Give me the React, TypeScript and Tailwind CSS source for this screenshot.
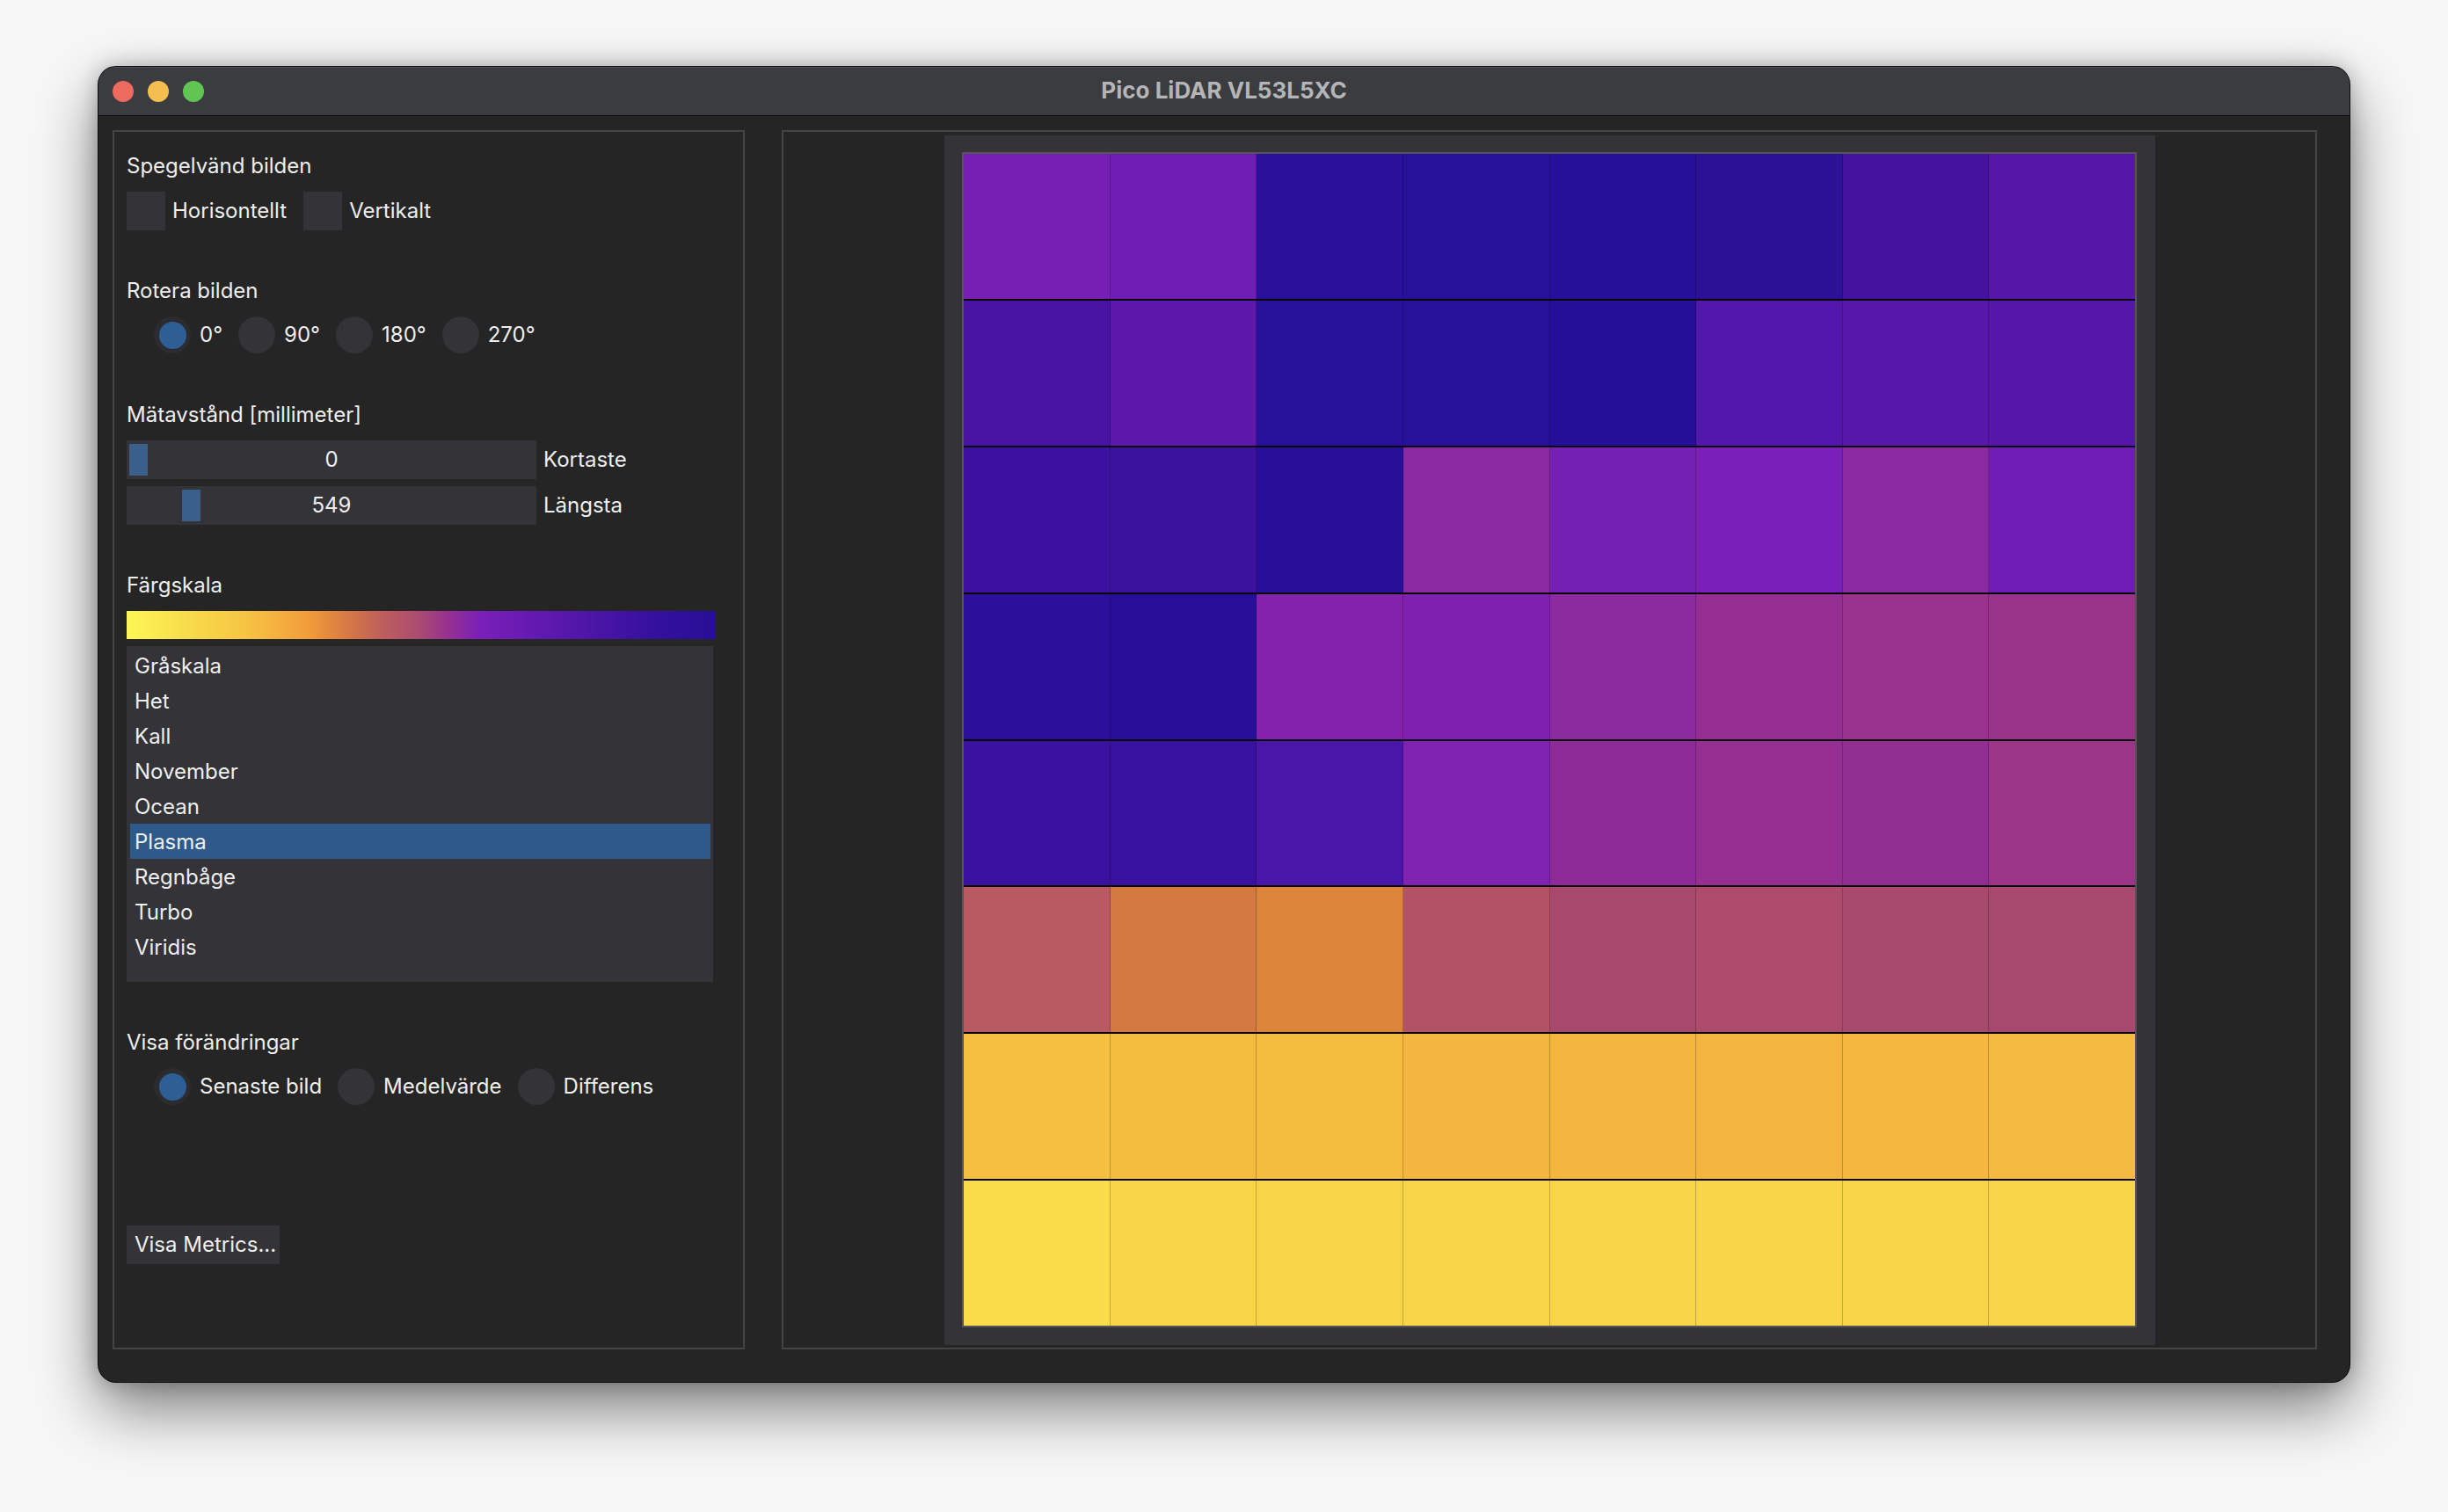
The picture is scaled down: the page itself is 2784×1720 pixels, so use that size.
import React from "react";

const heat: string[][] = [
  ["#761fb5", "#6f1db2", "#28109a", "#27109a", "#26109a", "#2c1197", "#43139f", "#5617a9"],
  ["#4813a2", "#5c18ab", "#28119a", "#27109a", "#250f99", "#5417ab", "#5717ab", "#5417a9"],
  ["#3c119f", "#3a129e", "#270f99", "#8a29a2", "#7520b5", "#7a1fb8", "#8b29a0", "#6e1db6"],
  ["#2b0f99", "#270f99", "#8323ad", "#7f20b1", "#8c2aa0", "#952f93", "#9a338d", "#9a348b"],
  ["#3b119f", "#38119e", "#4a15a9", "#8023b1", "#8e2b97", "#952f92", "#912e92", "#9a3587"],
  ["#b95a63", "#d47940", "#dc853a", "#b35266", "#a8496c", "#ad4b6c", "#a74a6b", "#a7486e"],
  ["#f5c042", "#f5bd40", "#f5bd40", "#f4b640", "#f4b540", "#f4b540", "#f4b840", "#f3b940"],
  ["#fadc4a", "#f8d648", "#f8d548", "#f8d548", "#f8d548", "#f8d548", "#f8d548", "#f8d548"],
];

const colormaps = ["Gråskala", "Het", "Kall", "November", "Ocean", "Plasma", "Regnbåge", "Turbo", "Viridis"];

function Heading({ children }: { children: React.ReactNode }) {
  return <div className="text-[24px] leading-[30px] text-[#eeeeee]">{children}</div>;
}

function Radio({ checked, label, first }: { checked?: boolean; label: string; first?: boolean }) {
  return (
    <div className={`flex items-center ${first ? "" : "ml-[18px]"}`}>
      <div
        className={`w-[42px] h-[42px] rounded-full flex items-center justify-center ${
          checked ? "bg-[#2b2b30]" : "bg-[#333338]"
        }`}
      >
        {checked && <div className="w-[31px] h-[31px] rounded-full bg-[#2e5f94]" />}
      </div>
      <span className="ml-[10px] text-[24px] leading-[30px] text-[#eeeeee]">{label}</span>
    </div>
  );
}

function Slider({ value, pos, label }: { value: string; pos: number; label: string }) {
  return (
    <div className="flex items-center">
      <div className="relative w-[466px] h-[44px] bg-[#333338] flex items-center justify-center">
        <div className="absolute top-[4px] w-[21px] h-[36px] bg-[#3a5f8a]" style={{ left: pos }} />
        <span className="text-[24px] leading-[30px] text-[#eeeeee]">{value}</span>
      </div>
      <span className="ml-[8px] text-[24px] leading-[30px] text-[#eeeeee]">{label}</span>
    </div>
  );
}

export default function App() {
  return (
    <div
      className="w-[2784px] h-[1720px] bg-[#f7f7f7] pl-[112px] pt-[76px] overflow-hidden"
      style={{ fontFamily: "Inter, 'Noto Sans', 'Liberation Sans', sans-serif" }}
    >
      <div className="w-[2560px] h-[1496px] rounded-[20px] bg-[#252525] flex flex-col overflow-hidden shadow-[0_0_0_1px_#0c0c0c,0_30px_70px_rgba(0,0,0,0.5),0_0_24px_rgba(0,0,0,0.25)]">
        {/* Title bar */}
        <div className="relative h-[56px] bg-[#3b3c3f] border-b border-[#0f0f0f] flex items-center shadow-[inset_0_1px_0_rgba(255,255,255,0.12)]">
          <div className="flex items-center gap-[16px] pl-[16px]">
            <div className="w-[24px] h-[24px] rounded-full bg-[#ed6a5e]" />
            <div className="w-[24px] h-[24px] rounded-full bg-[#f5bf4f]" />
            <div className="w-[24px] h-[24px] rounded-full bg-[#61c554]" />
          </div>
          <div className="absolute inset-0 flex items-center justify-center pb-[2px] text-[26px] font-bold text-[#b5b5b7]">
            Pico LiDAR VL53L5XC
          </div>
        </div>

        {/* Body */}
        <div className="flex-1 flex pt-[16px] pl-[16px] pr-[37px] pb-[36px]">
          {/* Left panel */}
          <div className="w-[719px] h-[1387px] border-2 border-[#444444] pl-[14px] pt-[24px] flex flex-col">
            <Heading>Spegelvänd bilden</Heading>
            <div className="mt-[14px] flex items-center h-[44px]">
              <div className="w-[44px] h-[44px] bg-[#333338]" />
              <span className="ml-[8px] text-[24px] leading-[30px] text-[#eeeeee]">Horisontellt</span>
              <div className="ml-[19px] w-[44px] h-[44px] bg-[#333338]" />
              <span className="ml-[8px] text-[24px] leading-[30px] text-[#eeeeee]">Vertikalt</span>
            </div>

            <div className="mt-[54px]">
              <Heading>Rotera bilden</Heading>
            </div>
            <div className="mt-[14px] pl-[31px] flex items-center h-[42px]">
              <Radio checked first label="0°" />
              <Radio label="90°" />
              <Radio label="180°" />
              <Radio label="270°" />
            </div>

            <div className="mt-[55px]">
              <Heading>Mätavstånd [millimeter]</Heading>
            </div>
            <div className="mt-[14px] flex flex-col gap-[8px]">
              <Slider value="0" pos={3} label="Kortaste" />
              <Slider value="549" pos={63} label="Längsta" />
            </div>

            <div className="mt-[54px]">
              <Heading>Färgskala</Heading>
            </div>
            <div className="mt-[14px] w-[669px] h-[32px] bg-[linear-gradient(to_right,#fdf756_0%,#f8dc4b_10%,#f6c543_20%,#f29c3a_31%,#d97b43_37%,#c0605c_43%,#a94a72_50%,#942f91_55%,#7a20b8_60%,#6219b0_70%,#4a15a6_80%,#34109d_90%,#280f96_100%)]" />
            <div className="mt-[8px] w-[667px] h-[382px] bg-[#333338] pt-[2px] pl-[4px] pr-[3px]">
              {colormaps.map((c) => (
                <div
                  key={c}
                  className={`h-[40px] pl-[5px] pt-[2px] text-[24px] leading-[38px] text-[#eeeeee] ${
                    c === "Plasma" ? "bg-[#2d5a8a]" : ""
                  }`}
                >
                  {c}
                </div>
              ))}
            </div>

            <div className="mt-[54px]">
              <Heading>Visa förändringar</Heading>
            </div>
            <div className="mt-[14px] pl-[31px] flex items-center h-[42px]">
              <Radio checked first label="Senaste bild" />
              <Radio label="Medelvärde" />
              <Radio label="Differens" />
            </div>

            <div className="mt-[137px]">
              <div className="w-[174px] flex items-center h-[44px] bg-[#333338] pl-[9px] text-[24px] leading-[30px] text-[#eeeeee] whitespace-nowrap">
                Visa Metrics...
              </div>
            </div>
          </div>

          {/* Right panel */}
          <div className="ml-[42px] flex-1 h-[1387px] border-2 border-[#444444] flex items-center justify-center">
            <div className="w-[1377px] h-[1376px] bg-[#333338] flex items-center justify-center">
              <div className="w-[1336px] h-[1337px] border-2 border-[rgba(90,90,95,0.85)] flex flex-col">
                {heat.map((row, r) => (
                  <div
                    key={r}
                    className={`flex-1 flex ${r < 7 ? "border-b-2 border-[rgba(0,0,0,0.85)]" : ""}`}
                  >
                    {row.map((col, c) => (
                      <div
                        key={c}
                        className={`flex-1 ${c < 7 ? "border-r border-[rgba(0,0,0,0.22)]" : ""}`}
                        style={{ backgroundColor: col }}
                      />
                    ))}
                  </div>
                ))}
              </div>
            </div>
          </div>
        </div>
      </div>
    </div>
  );
}
